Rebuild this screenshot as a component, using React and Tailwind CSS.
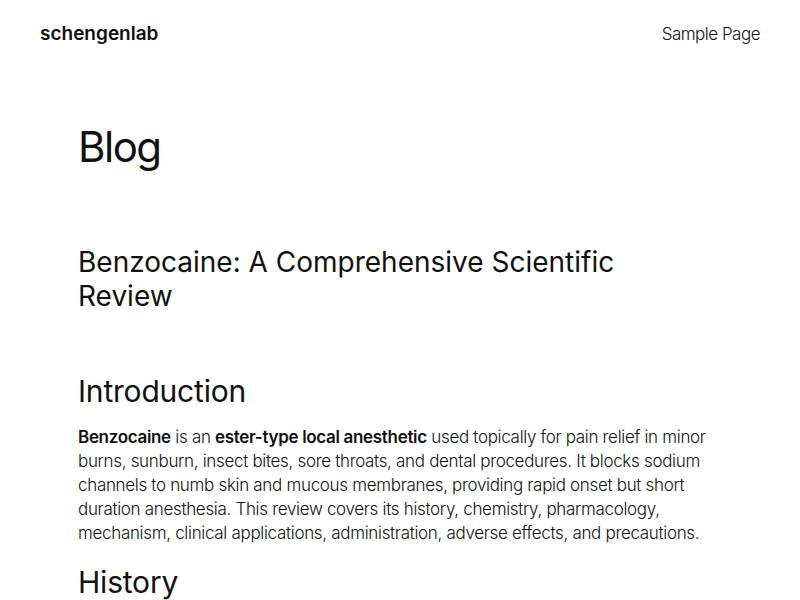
export default function App() {
  return (
    <div className="min-h-screen bg-white text-[#111111] font-['Inter','Noto_Sans',sans-serif]">
      <header className="flex items-center justify-between px-[40px] pt-[22px]">
        <div className="text-[19px] leading-[24px] font-semibold tracking-[0px]">schengenlab</div>
        <nav className="text-[17px] leading-[24px] font-light tracking-[-0.5px]">Sample Page</nav>
      </header>
      <main className="px-[78px]">
        <h1 className="mt-[76px] text-[42px] leading-[50px] font-normal tracking-[-1.5px]">Blog</h1>
        <h2 className="mt-[73px] max-w-[600px] text-[28px] leading-[34px] font-normal tracking-[0px]">
          Benzocaine: A Comprehensive Scientific Review
        </h2>
        <h3 className="mt-[60px] text-[30px] leading-[36px] font-normal tracking-[-0.2px]">Introduction</h3>
        <p className="mt-[16px] text-[17px] leading-[24px] font-light tracking-[-0.32px]">
          <strong className="font-semibold">Benzocaine</strong> is an{" "}
          <strong className="font-semibold">ester-type local anesthetic</strong> used topically for pain relief in minor burns,
          sunburn, insect bites, sore throats, and dental procedures. It blocks sodium channels to numb skin and mucous
          membranes, providing rapid onset but short duration anesthesia. This review covers its history, chemistry,
          pharmacology, mechanism, clinical applications, administration, adverse effects, and precautions.
        </p>
        <h3 className="mt-[19px] text-[30px] leading-[36px] font-normal tracking-[-0.2px]">History</h3>
      </main>
    </div>
  );
}
